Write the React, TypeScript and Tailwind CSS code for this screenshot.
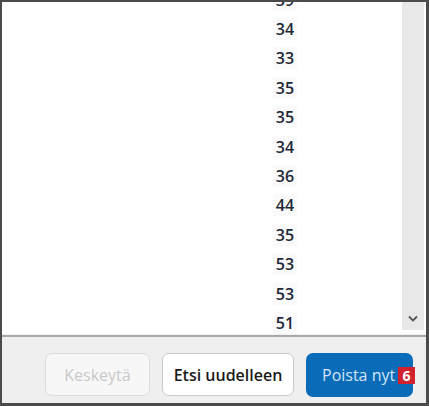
import React from "react";

const nums = ["39", "34", "33", "35", "35", "34", "36", "44", "35", "53", "53", "51"];

export default function App() {
  return (
    <div
      className="w-[429px] h-[406px] bg-[#4b4b4b] pt-[2px] pl-[2px] pr-[3px] pb-[3px] flex flex-col"
      style={{ fontFamily: '"Open Sans", "Noto Sans", sans-serif' }}
    >
      <div className="flex-1 flex flex-col bg-[#efefef]">
        <div className="h-[332px] bg-white flex overflow-hidden">
          <div className="flex-1 overflow-hidden">
            <div className="mt-[-17px] flex flex-col items-center pl-[166px]">
              {nums.map((n, i) => (
                <div key={i} className="h-[29.4px] flex items-center">
                  <span className="px-[3px] bg-[#fafafa] text-[16px] leading-[22px] font-semibold text-[#1e2836]">
                    {n}
                  </span>
                </div>
              ))}
            </div>
          </div>
          <div className="w-[22px] mr-[2px] h-[328px] bg-[#e8e8e8] flex flex-col justify-end items-center pb-[8px]">
            <svg width="10" height="7" viewBox="0 0 10 7">
              <path d="M1 1.5 L5 5.5 L9 1.5" fill="none" stroke="#555" strokeWidth="1.8" />
            </svg>
          </div>
        </div>
        <div className="h-[2px] bg-[#a8a8a8] mt-[1px]" />
        <div className="flex-1 flex items-start pt-[16px] pl-[43px] gap-[12px]">
          <button className="w-[105px] h-[43px] rounded-[7px] border border-[#dcdcdc] bg-[#f7f7f7] text-[16px] text-[#c9c9c9]">
            Keskeytä
          </button>
          <button className="w-[132px] h-[43px] rounded-[7px] border border-[#c9c9c9] bg-white text-[16px] font-semibold text-[#1b1b1b]">
            Etsi uudelleen
          </button>
          <button className="relative w-[107px] h-[44px] rounded-[7px] bg-[#0a6cb8] text-[16px] text-[#d2e5f5] flex items-center pl-[16px]">
            Poista nyt
            <span className="absolute left-[92px] top-[14px] w-[17px] h-[17px] bg-[#d3222f] text-white text-[14px] font-bold leading-[17px] text-center">
              6
            </span>
          </button>
        </div>
      </div>
    </div>
  );
}
